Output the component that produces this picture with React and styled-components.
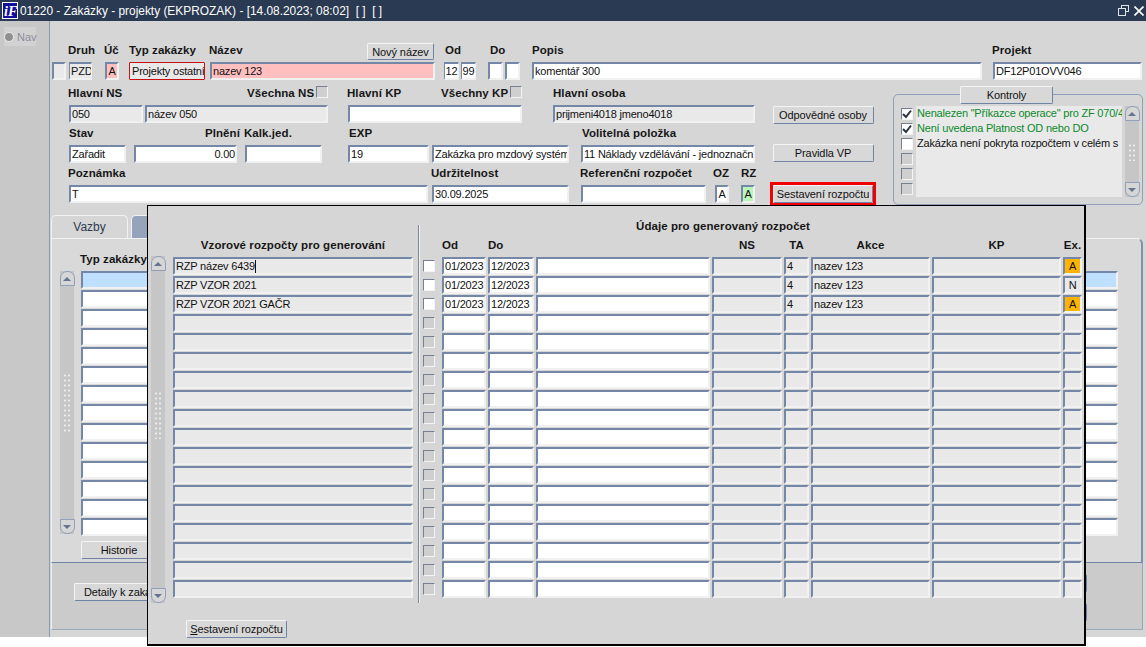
import React from "react";
import styled, { createGlobalStyle } from "styled-components";

const GlobalStyle = createGlobalStyle`
  html, body {
    margin: 0;
    padding: 0;
    background: #fff;
    font-family: "Liberation Sans", Arial, sans-serif;
    font-size: 12px;
    color: #111;
  }
`;

const Page = styled.div`
  position: relative;
  width: 1146px;
  height: 647px;
  overflow: hidden;
`;

const TitleBar = styled.div`
  display: flex;
  align-items: center;
  height: 21px;
  background: #2a3a52;
  color: #fff;
  font-size: 11.9px;
  padding-left: 2px;
  gap: 2px;
`;

const TitleText = styled.span`
  flex: 1;
  white-space: pre;
`;

const WindowIcons = styled.div`
  display: flex;
  gap: 5px;
  align-items: center;
  padding-right: 2px;
`;

const Body = styled.div`
  display: flex;
  height: 616px;
  background: #d6d6d6;
`;

const NavColumn = styled.div`
  flex: none;
  box-sizing: border-box;
  width: 50px;
  background: #c8c8c8;
  border-right: 1px solid #8c9bb0;
  padding: 6px 0 0 4px;
`;

const NavItem = styled.div`
  display: flex;
  align-items: center;
  gap: 3px;
  width: 32px;
  height: 19px;
  background: #d2d2d2;
  color: #8d8d9c;
  font-size: 11px;
`;

const NavRadio = styled.span`
  flex: none;
  width: 10px;
  height: 10px;
  border-radius: 50%;
  background: #8f8f8f;
  border: 1px solid #e8e8e8;
  box-sizing: border-box;
`;

const Main = styled.div`
  width: 1096px;
  padding-top: 21px;
`;

const Row = styled.div`
  box-sizing: border-box;
  display: flex;
  align-items: flex-start;
  height: ${({ $h }) => $h || 18}px;
  padding-top: ${({ $pt }) => $pt || 0}px;
`;

const Label = styled.span`
  flex: none;
  display: block;
  width: ${({ $w }) => ($w ? `${$w}px` : "auto")};
  margin-left: ${({ $ml }) => $ml || 0}px;
  font-weight: 700;
  font-size: 11.5px;
  line-height: 14px;
  letter-spacing: 0.07px;
  white-space: nowrap;
  color: #161616;
  text-align: ${({ $align }) => $align || "left"};
`;

const Field = styled.div`
  flex: none;
  position: relative;
  box-sizing: border-box;
  width: ${({ $w }) => ($w ? `${$w}px` : "auto")};
  height: 18px;
  margin-left: ${({ $ml }) => $ml || 0}px;
  padding: 0 0 0 ${({ $pad }) => ($pad === undefined ? 1 : $pad)}px;
  border-style: solid;
  border-width: ${({ $tight }) => ($tight ? "2px 1px" : "2px")};
  border-color: #7487a6 #f1f1f1 #f1f1f1 #7487a6;
  border-radius: 1px;
  background: ${({ $bg }) => $bg || "#fff"};
  font-size: 11px;
  letter-spacing: -0.2px;
  line-height: 14px;
  white-space: nowrap;
  overflow: hidden;
  text-align: ${({ $align }) => $align || "left"};
  color: #111;
`;

const FocusedField = styled(Field)`
  border: 1px solid #c81010;
  padding-left: 2px;
  line-height: 16px;
`;

const Caret = styled.span`
  display: inline-block;
  width: 1px;
  height: 13px;
  background: #111;
  vertical-align: -3px;
`;

const SmallCheck = styled.span`
  flex: none;
  display: inline-flex;
  align-items: center;
  justify-content: center;
  box-sizing: border-box;
  width: 12px;
  height: 12px;
  margin-left: ${({ $ml }) => $ml || 0}px;
  border-style: solid;
  border-width: 1px;
  border-color: #77808f #f4f4f4 #f4f4f4 #77808f;
  background: ${({ $on }) => ($on ? "#fff" : "#cfcfcf")};
`;

const Button = styled.div`
  flex: none;
  box-sizing: border-box;
  display: flex;
  align-items: center;
  justify-content: ${({ $start }) => ($start ? "flex-start" : "center")};
  width: ${({ $w }) => ($w ? `${$w}px` : "auto")};
  height: ${({ $h }) => $h || 18}px;
  margin-left: ${({ $ml }) => $ml || 0}px;
  margin-top: ${({ $mt }) => $mt || 0}px;
  padding-left: ${({ $start }) => ($start ? 9 : 0)}px;
  background: #d8d8d8;
  border-style: solid;
  border-width: 1px;
  border-color: #f4f4f4 #6f83a3 #6f83a3 #f4f4f4;
  border-radius: 2px;
  font-size: 11px;
  letter-spacing: -0.1px;
  white-space: pre;
  color: #111;
  overflow: hidden;
`;

const Upper = styled.div`
  display: flex;
  margin-top: 5px;
  height: 120px;
`;

const LeftForm = styled.div`
  width: 720px;
  flex: none;
`;

const FormRow = styled.div`
  height: 40px;
`;

const ButtonColumn = styled.div`
  width: 106px;
  flex: none;
  padding-top: 21px;
  display: flex;
  flex-direction: column;
  align-items: center;
`;

const RedFrame = styled.div`
  margin-top: 20px;
  border: 3px solid #f00000;
  box-sizing: border-box;
  width: 106px;
  height: 24px;
  display: flex;
`;

const ControlsAside = styled.div`
  position: relative;
  width: 250px;
  margin-left: 17px;
  padding-top: 9px;
`;

const ControlsLegend = styled(Button)`
  position: absolute;
  left: 67px;
  top: 1px;
`;

const ControlsBox = styled.div`
  box-sizing: border-box;
  height: 111px;
  display: flex;
  padding: 11px 0 0 7px;
  border: 1px solid #8fa0b8;
  border-radius: 5px;
`;

const CheckStack = styled.div`
  display: flex;
  flex-direction: column;
  gap: 3px;
  padding-top: 2px;
  width: 15px;
  flex: none;
`;

const MessageList = styled.div`
  width: 206px;
  height: 91px;
  flex: none;
  background: #e9e9e9;
  overflow: hidden;
  margin-right: 3px;
`;

const Message = styled.div`
  font-size: 11px;
  letter-spacing: -0.2px;
  line-height: 15px;
  height: 15px;
  padding-left: 1px;
  white-space: nowrap;
  color: ${({ $ok }) => ($ok ? "#0b8a2b" : "#111")};
`;

const TabStrip = styled.div`
  display: flex;
  height: 23px;
  margin-top: 10px;
  padding-left: 1px;
  gap: 3px;
`;

const Tab = styled.div`
  box-sizing: border-box;
  width: ${({ $w }) => $w}px;
  display: flex;
  align-items: center;
  justify-content: center;
  font-size: 12px;
  color: #2e3a50;
  background: ${({ $active }) => ($active ? "#d6d6d6" : "#95a4ba")};
  border: 1px solid #f2f2f2;
  border-bottom: none;
  border-radius: 5px 5px 0 0;
`;

const TabPanel = styled.div`
  box-sizing: border-box;
  width: 1092px;
  height: 324px;
  margin-left: 1px;
  padding: 13px 0 0 8px;
  background: #d9d9d9;
  border-style: solid;
  border-width: 1px 2px 0 1px;
  border-color: #f2f2f2 #7d8fa9 #6f83a3 #f2f2f2;
  border-radius: 0 6px 0 0;
`;

const GridLabel = styled(Label)`
  margin-left: 20px;
  height: 19px;
`;

const GridBody = styled.div`
  display: flex;
  gap: 7px;
`;

const RowStack = styled.div`
  display: flex;
  flex-direction: column;
  gap: 1px;
`;

const ScrollTrack = styled.div`
  flex: none;
  width: 14px;
  height: ${({ $h }) => $h}px;
  display: flex;
  flex-direction: column;
  align-items: center;
  justify-content: space-between;
  background: #c6c6c6;
`;

const ScrollButton = styled.div`
  flex: none;
  box-sizing: border-box;
  width: 15px;
  height: 15px;
  display: flex;
  align-items: center;
  justify-content: center;
  background: #d6d6d6;
  border: 1px solid #8fa0b8;
  border-radius: ${({ $down }) => ($down ? "0 0 7px 7px" : "7px 7px 0 0")};

  &::after {
    content: "";
    border-left: 4px solid transparent;
    border-right: 4px solid transparent;
    ${({ $down }) => ($down ? "border-top" : "border-bottom")}: 4px solid #64748f;
  }
`;

const ScrollGrip = styled.div`
  width: 8px;
  height: ${({ $h }) => $h || 20}px;
  margin-bottom: ${({ $lift }) => $lift || 0}px;
  background-image: radial-gradient(circle, #ededed 1px, transparent 1.2px);
  background-size: 4px 5px;
`;

const Footer = styled.div`
  box-sizing: border-box;
  width: 1092px;
  height: 68px;
  margin-left: 1px;
  padding: 20px 2px 0 22px;
  display: flex;
  justify-content: space-between;
  background: #cbcbcb;
  border-style: solid;
  border-width: 1px;
  border-color: #6f83a3 #9aa8bc #9aa8bc #f0f0f0;
`;

const HiddenButtons = styled.div`
  display: flex;
  flex-direction: column;
  gap: 11px;
  margin-top: -9px;
  margin-right: 53px;
`;

const Dialog = styled.div`
  position: absolute;
  left: 147px;
  top: 205px;
  width: 939px;
  height: 441px;
  box-sizing: border-box;
  padding: 0 0 0 3px;
  background: #d6d6d6;
  border: 1px solid #000;
  border-width: 1px 2px 2px 1px;
  display: flex;
  flex-direction: column;
`;

const DialogColumns = styled.div`
  display: flex;
  height: 397px;
`;

const DialogScroll = styled.div`
  padding-top: 50px;
  flex: none;
`;

const TemplateColumn = styled.div`
  flex: none;
  width: 240px;
  margin-left: 8px;
  padding-top: 32px;
`;

const ColumnTitle = styled(Label)`
  height: 19px;
`;

const Divider = styled.div`
  flex: none;
  width: 2px;
  height: 378px;
  margin: 19px 3px 0 5px;
  background: linear-gradient(90deg, #7d8796 50%, #f2f2f2 50%);
`;

const DataColumn = styled.div`
  flex: none;
  padding-top: 13px;
`;

const DataTitle = styled(Label)`
  height: 19px;
`;

const DataGrid = styled.div`
  display: grid;
  grid-template-columns: 17px 44px 46px 174px 70px 25px 119px 129px 19px;
  column-gap: 2px;
  height: 19px;
`;

const CheckCell = styled.div`
  padding-top: 3px;
`;

const DialogFooter = styled.div`
  padding: 17px 0 0 35px;
`;

const UnderlineKey = styled.span`
  text-decoration: underline;
`;

const grey = "#e9e9e9";

const Logo = () => (
  <svg width="16" height="17" viewBox="0 0 16 17">
    <rect x="0" y="0" width="16" height="17" fill="#fff" />
    <rect x="1" y="1" width="14" height="15" fill="#10109a" />
    <text x="2" y="14" fontFamily="Liberation Serif, serif" fontStyle="italic" fontWeight="700" fontSize="14" fill="#fff">
      iF
    </text>
  </svg>
);

const RestoreIcon = () => (
  <svg width="11" height="11" viewBox="0 0 11 11" fill="none" stroke="#dfe4ec" strokeWidth="1">
    <rect x="3.5" y="0.5" width="7" height="6" />
    <rect x="0.5" y="3.5" width="7" height="7" fill="#2a3a52" />
  </svg>
);

const CloseIcon = () => (
  <svg width="10" height="10" viewBox="0 0 10 10" stroke="#fff" strokeWidth="1.6">
    <path d="M0.5 0.5 L9.5 9.5 M9.5 0.5 L0.5 9.5" />
  </svg>
);

const CheckMark = () => (
  <svg width="10" height="10" viewBox="0 0 10 10" fill="none" stroke="#2b3442" strokeWidth="2">
    <path d="M1 5 L4 8 L9 1.5" />
  </svg>
);

const Scrollbar = ({ h, gripH, lift }) => (
  <ScrollTrack $h={h}>
    <ScrollButton />
    <ScrollGrip $h={gripH} $lift={lift} />
    <ScrollButton $down />
  </ScrollTrack>
);

const links = Array.from({ length: 14 }, (_, i) => i);

const templates = [
  "RZP název 6439",
  "RZP VZOR 2021",
  "RZP VZOR 2021 GAČR",
  ...Array(15).fill(""),
];

const budgetRows = [
  { od: "01/2023", doo: "12/2023", ta: "4", akce: "nazev 123", ex: "A" },
  { od: "01/2023", doo: "12/2023", ta: "4", akce: "nazev 123", ex: "N" },
  { od: "01/2023", doo: "12/2023", ta: "4", akce: "nazev 123", ex: "A" },
  ...Array(15).fill({}),
];

const App = () => (
  <Page>
    <GlobalStyle />
    <TitleBar>
      <Logo />
      <TitleText>01220 - Zakázky - projekty (EKPROZAK) - [14.08.2023; 08:02]  [ ]  [ ]</TitleText>
      <WindowIcons>
        <RestoreIcon />
        <CloseIcon />
      </WindowIcons>
    </TitleBar>
    <Body>
      <NavColumn>
        <NavItem>
          <NavRadio />
          Nav
        </NavItem>
      </NavColumn>
      <Main>
        <Row $h={20} $pt={1}>
          <Label $ml={18} $w={36}>Druh</Label>
          <Label $w={25}>Úč</Label>
          <Label $w={80}>Typ zakázky</Label>
          <Label $w={158}>Název</Label>
          <Button $w={67} $h={17}>Nový název</Button>
          <Label $ml={11} $w={45}>Od</Label>
          <Label $w={42}>Do</Label>
          <Label $w={460}>Popis</Label>
          <Label>Projekt</Label>
        </Row>
        <Row>
          <Field $ml={2} $w={14} $bg={grey} />
          <Field $ml={3} $w={23} $bg={grey} $tight $pad={1}>PZD</Field>
          <Field $ml={13} $w={14} $bg="#ffbfbf" $align="center" $pad={0}>A</Field>
          <FocusedField $ml={10} $w={76} $bg={grey} $pad={2}>Projekty ostatní<Caret /></FocusedField>
          <Field $ml={5} $w={225} $bg="#ffbfbf">nazev 123</Field>
          <Field $ml={9} $w={15} $align="center" $pad={0} $tight>12</Field>
          <Field $ml={2} $w={15} $align="center" $pad={0} $tight>99</Field>
          <Field $ml={12} $w={15} />
          <Field $ml={2} $w={15} />
          <Field $ml={12} $w={450}>komentář 300</Field>
          <Field $ml={11} $w={149}>DF12P01OVV046</Field>
        </Row>
        <Upper>
          <LeftForm>
            <FormRow>
              <Row $h={20} $pt={1}>
                <Label $ml={18} $w={179}>Hlavní NS</Label>
                <Label $w={65}>Všechna NS</Label>
                <SmallCheck $ml={4} />
                <Label $ml={19} $w={94}>Hlavní KP</Label>
                <Label $w={65}>Všechny KP</Label>
                <SmallCheck $ml={4} />
                <Label $ml={31}>Hlavní osoba</Label>
              </Row>
              <Row>
                <Field $ml={19} $w={74} $bg={grey}>050</Field>
                <Field $ml={2} $w={183} $bg={grey}>název 050</Field>
                <Field $ml={20} $w={174} />
                <Field $ml={31} $w={202} $bg={grey}>prijmeni4018 jmeno4018</Field>
              </Row>
            </FormRow>
            <FormRow>
              <Row $h={20} $pt={1}>
                <Label $ml={19} $w={136}>Stav</Label>
                <Label $w={39}>Plnění</Label>
                <Label $w={105}>Kalk.jed.</Label>
                <Label $w={233}>EXP</Label>
                <Label>Volitelná položka</Label>
              </Row>
              <Row>
                <Field $ml={19} $w={57}>Zařadit</Field>
                <Field $ml={8} $w={103} $align="right">0.00</Field>
                <Field $ml={8} $w={77} />
                <Field $ml={26} $w={81}>19</Field>
                <Field $ml={3} $w={137}>Zakázka pro mzdový systém</Field>
                <Field $ml={12} $w={174}>11 Náklady vzdělávání - jednoznačně</Field>
              </Row>
            </FormRow>
            <FormRow>
              <Row $h={20} $pt={1}>
                <Label $ml={18} $w={363}>Poznámka</Label>
                <Label $w={149}>Udržitelnost</Label>
                <Label $w={133}>Referenční rozpočet</Label>
                <Label $w={28}>OZ</Label>
                <Label>RZ</Label>
              </Row>
              <Row>
                <Field $ml={19} $w={359}>T</Field>
                <Field $ml={4} $w={137}>30.09.2025</Field>
                <Field $ml={12} $w={125} />
                <Field $ml={9} $w={14} $align="center" $pad={0}>A</Field>
                <Field $ml={12} $w={14} $bg="#b9f7b9" $align="center" $pad={0}>A</Field>
              </Row>
            </FormRow>
          </LeftForm>
          <ButtonColumn>
            <Button $w={101}>Odpovědné osoby</Button>
            <Button $w={101} $mt={20}>Pravidla VP</Button>
            <RedFrame>
              <Button $w={100}>Sestavení rozpočtu</Button>
            </RedFrame>
          </ButtonColumn>
          <ControlsAside>
            <ControlsLegend $w={93}>Kontroly</ControlsLegend>
            <ControlsBox>
              <CheckStack>
                <SmallCheck $on><CheckMark /></SmallCheck>
                <SmallCheck $on><CheckMark /></SmallCheck>
                <SmallCheck $on />
                <SmallCheck />
                <SmallCheck />
                <SmallCheck />
              </CheckStack>
              <MessageList>
                <Message $ok>Nenalezen "Příkazce operace" pro ZF 070/4</Message>
                <Message $ok>Není uvedena Platnost OD nebo DO</Message>
                <Message>Zakázka není pokryta rozpočtem v celém s</Message>
              </MessageList>
              <Scrollbar h={91} gripH={18} />
            </ControlsBox>
          </ControlsAside>
        </Upper>
        <TabStrip>
          <Tab $active $w={77}>Vazby</Tab>
          <Tab $w={40} />
        </TabStrip>
        <TabPanel>
          <GridLabel>Typ zakázky</GridLabel>
          <GridBody>
            <Scrollbar h={263} gripH={60} />
            <div>
              <RowStack>
                {links.map((i) => (
                  <Field key={i} $w={1037} $bg={i === 0 ? "#bfdfff" : "#fff"} />
                ))}
              </RowStack>
              <Button $w={76} $mt={5}>Historie</Button>
            </div>
          </GridBody>
        </TabPanel>
        <Footer>
          <Button $w={120} $start>Detaily k zakázce</Button>
          <HiddenButtons>
            <Button $w={40} />
            <Button $w={40} />
          </HiddenButtons>
        </Footer>
      </Main>
    </Body>
    <Dialog>
      <DialogColumns>
        <DialogScroll>
          <Scrollbar h={347} gripH={48} lift={30} />
        </DialogScroll>
        <TemplateColumn>
          <ColumnTitle $w={240} $align="center">Vzorové rozpočty pro generování</ColumnTitle>
          <RowStack>
            {templates.map((name, i) => (
              <Field key={i} $w={240} $bg={grey}>
                {name}
                {i === 0 && <Caret />}
              </Field>
            ))}
          </RowStack>
        </TemplateColumn>
        <Divider />
        <DataColumn>
          <DataTitle $w={600} $align="center">Údaje pro generovaný rozpočet</DataTitle>
          <DataGrid>
            <span />
            <Label>Od</Label>
            <Label>Do</Label>
            <span />
            <Label $align="center">NS</Label>
            <Label $align="center">TA</Label>
            <Label $align="center">Akce</Label>
            <Label $align="center">KP</Label>
            <Label $align="center">Ex.</Label>
          </DataGrid>
          {budgetRows.map((row, i) => (
            <DataGrid key={i}>
              <CheckCell>
                <SmallCheck $on={!!row.od} />
              </CheckCell>
              <Field>{row.od}</Field>
              <Field>{row.doo}</Field>
              <Field />
              <Field $bg={grey} />
              <Field $bg={grey}>{row.ta}</Field>
              <Field $bg={grey}>{row.akce}</Field>
              <Field $bg={grey} />
              <Field $bg={row.ex === "A" ? "#ffb405" : grey} $align="center" $pad={0}>{row.ex}</Field>
            </DataGrid>
          ))}
        </DataColumn>
      </DialogColumns>
      <DialogFooter>
        <Button $w={101}>
          <UnderlineKey>S</UnderlineKey>estavení rozpočtu
        </Button>
      </DialogFooter>
    </Dialog>
  </Page>
);

export default App;
